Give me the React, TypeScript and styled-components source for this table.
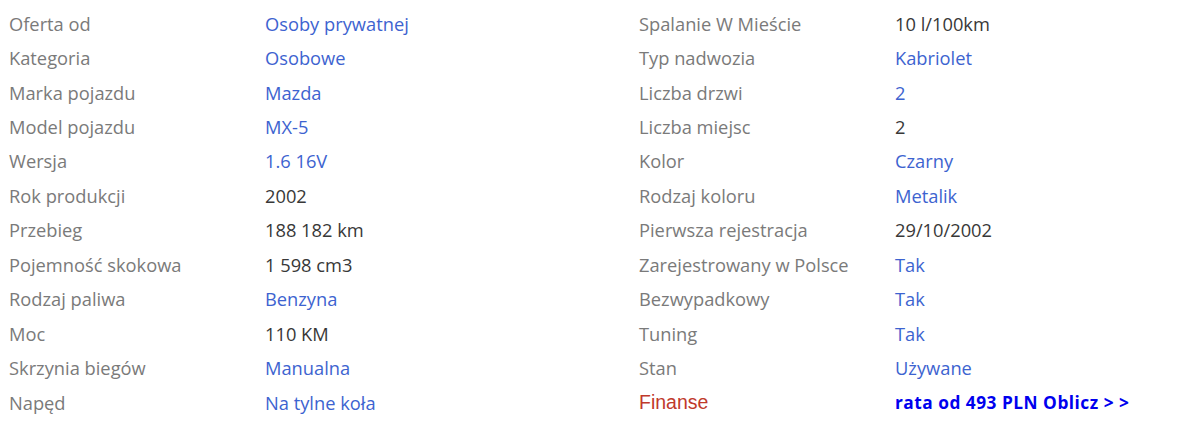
import React from "react";
import styled, { createGlobalStyle } from "styled-components";

const Global = createGlobalStyle`
  html, body { margin: 0; padding: 0; background: #fff; }
  body { font-family: "Open Sans", "Noto Sans", sans-serif; }
`;

const Page = styled.div`
  display: grid;
  grid-template-columns: 630px 1fr;
  padding: 6px 0 0 9px;
  box-sizing: border-box;
  width: 100%;
  overflow: hidden;
`;

const Table = styled.div`
  display: flex;
  flex-direction: column;
`;

const Row = styled.div`
  display: grid;
  grid-template-columns: 256px 1fr;
  height: 34.45px;
  align-items: center;
`;

type Tone = "link" | "dark";

const Label = styled.div<{ $finance?: boolean }>`
  font-family: ${(p) => (p.$finance ? '"Liberation Sans", Arial, sans-serif' : '"Open Sans", "Noto Sans", sans-serif')};
  font-size: ${(p) => (p.$finance ? "19.5px" : "18.3px")};
  color: ${(p) => (p.$finance ? "#c0392b" : "#7a7a7a")};
  white-space: nowrap;
`;

const Value = styled.div<{ $tone: Tone }>`
  font-size: 18.3px;
  color: ${(p) => (p.$tone === "link" ? "#3d63d0" : "#383838")};
  white-space: nowrap;
`;

const FinanceLink = styled.a`
  font-family: "Open Sans", "Noto Sans", sans-serif;
  font-size: 17.3px;
  font-weight: 700;
  letter-spacing: 0.5px;
  color: #0000ee;
  text-decoration: none;
  white-space: nowrap;
`;

type Item = [string, string, Tone];

const left: Item[] = [
  ["Oferta od", "Osoby prywatnej", "link"],
  ["Kategoria", "Osobowe", "link"],
  ["Marka pojazdu", "Mazda", "link"],
  ["Model pojazdu", "MX-5", "link"],
  ["Wersja", "1.6 16V", "link"],
  ["Rok produkcji", "2002", "dark"],
  ["Przebieg", "188 182 km", "dark"],
  ["Pojemność skokowa", "1 598 cm3", "dark"],
  ["Rodzaj paliwa", "Benzyna", "link"],
  ["Moc", "110 KM", "dark"],
  ["Skrzynia biegów", "Manualna", "link"],
  ["Napęd", "Na tylne koła", "link"],
];

const right: Item[] = [
  ["Spalanie W Mieście", "10 l/100km", "dark"],
  ["Typ nadwozia", "Kabriolet", "link"],
  ["Liczba drzwi", "2", "link"],
  ["Liczba miejsc", "2", "dark"],
  ["Kolor", "Czarny", "link"],
  ["Rodzaj koloru", "Metalik", "link"],
  ["Pierwsza rejestracja", "29/10/2002", "dark"],
  ["Zarejestrowany w Polsce", "Tak", "link"],
  ["Bezwypadkowy", "Tak", "link"],
  ["Tuning", "Tak", "link"],
  ["Stan", "Używane", "link"],
];

export default function App() {
  return (
    <>
      <Global />
      <Page>
        <Table>
          {left.map(([l, v, t]) => (
            <Row key={l}>
              <Label>{l}</Label>
              <Value $tone={t}>{v}</Value>
            </Row>
          ))}
        </Table>
        <Table>
          {right.map(([l, v, t]) => (
            <Row key={l}>
              <Label>{l}</Label>
              <Value $tone={t}>{v}</Value>
            </Row>
          ))}
          <Row>
            <Label $finance>Finanse</Label>
            <div>
              <FinanceLink href="#">rata od 493 PLN Oblicz &gt; &gt;</FinanceLink>
            </div>
          </Row>
        </Table>
      </Page>
    </>
  );
}
